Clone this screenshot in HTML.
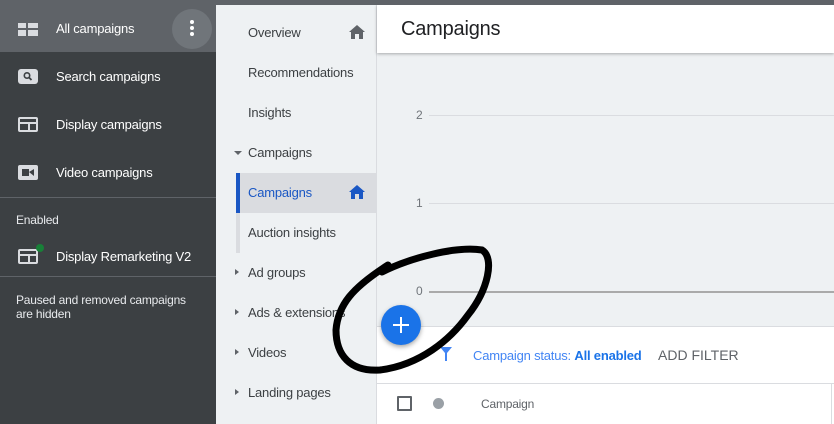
<!DOCTYPE html>
<html><head><style>
*{margin:0;padding:0;box-sizing:border-box}
body{width:834px;height:424px;overflow:hidden;font-family:"Liberation Sans",Arial,sans-serif;background:#eef1f3;position:relative;letter-spacing:-0.2px}
.abs{position:absolute}
.side{left:0;top:0;width:216px;height:424px;background:#3c4043;color:#fff;font-size:13px}
.topbar{left:0;top:0;width:834px;height:5px;background:#5f6368;z-index:5}
.si{position:absolute;left:0;width:216px;height:48px;display:flex;align-items:center}
.si .ic{position:absolute;left:18px;width:20px;height:16px;background:#dadce0;border-radius:2px}
.si span{position:absolute;left:56px}
.nav{left:216px;top:0;width:161px;height:424px;background:#eef1f3;border-right:1px solid #dadce0;font-size:13px;color:#3c4043}
.ni{position:absolute;left:32px}
.tri{position:absolute;left:19px;width:0;height:0;border-top:3px solid transparent;border-bottom:3px solid transparent;border-left:4px solid #5f6368}
</style></head><body>
<div class="abs topbar"></div>
<div class="abs side">
 <div class="si" style="top:5px;background:#5f6368;height:47px">
  <div style="position:absolute;left:18px;top:18px;width:20px;height:14px">
   <div class="abs" style="left:0;top:0;width:8px;height:5px;background:#dadce0"></div>
   <div class="abs" style="left:10px;top:0;width:10px;height:5px;background:#dadce0"></div>
   <div class="abs" style="left:0;top:7px;width:8px;height:6px;background:#dadce0"></div>
   <div class="abs" style="left:10px;top:7px;width:10px;height:6px;background:#dadce0"></div>
  </div>
  <span>All campaigns</span>
  <div class="abs" style="left:172px;top:4px;width:40px;height:40px;border-radius:50%;background:#70757a"></div>
  <div class="abs" style="left:190px;top:15px;width:4px;height:4px;border-radius:50%;background:#fff;box-shadow:0 6px 0 #fff,0 12px 0 #fff"></div>
 </div>
 <div class="si" style="top:52px"><div class="ic" style="top:17px;height:15px;border-radius:3px"></div>
  <svg class="abs" style="left:22px;top:19px" width="12" height="11" viewBox="0 0 12 11"><circle cx="5" cy="4.5" r="2.7" fill="none" stroke="#3c4043" stroke-width="1.6"/><path d="M7 6.5L9.5 9" stroke="#3c4043" stroke-width="1.8"/></svg>
  <span>Search campaigns</span></div>
 <div class="si" style="top:100px"><div class="ic" style="top:17px;height:15px;background:none;border:2px solid #dadce0"></div><div class="abs" style="left:18px;top:22px;width:20px;height:2px;background:#dadce0"></div><div class="abs" style="left:28px;top:22px;width:2px;height:9px;background:#dadce0"></div><span>Display campaigns</span></div>
 <div class="si" style="top:148px"><div class="ic" style="top:17px;height:15px"></div><svg class="abs" style="left:22px;top:20px" width="12" height="9" viewBox="0 0 12 9"><path d="M0 1h7v7H0zM7 4l5-3v7z" fill="#3c4043"/></svg><span>Video campaigns</span></div>
 <div class="abs" style="left:0;top:197px;width:216px;height:1px;background:#5f6368"></div>
 <div class="abs" style="left:16px;top:213px;font-size:12px;color:#e8eaed">Enabled</div>
 <div class="si" style="top:232px"><div class="ic" style="top:17px;height:15px;background:none;border:2px solid #dadce0"></div><div class="abs" style="left:18px;top:22px;width:20px;height:2px;background:#dadce0"></div><div class="abs" style="left:28px;top:22px;width:2px;height:9px;background:#dadce0"></div><div class="abs" style="left:36px;top:12px;width:8px;height:8px;border-radius:50%;background:#188038"></div><span>Display Remarketing V2</span></div>
 <div class="abs" style="left:0;top:276px;width:216px;height:1px;background:#5f6368"></div>
 <div class="abs" style="left:16px;top:293px;font-size:12px;line-height:14px;color:#e8eaed">Paused and removed campaigns<br>are hidden</div>
</div>
<div class="abs nav">
 <div class="ni" style="top:25px">Overview</div>
 <svg class="abs" style="left:133px;top:25px" width="16" height="14" viewBox="0 0 16 14"><path d="M8 0L0 7h2v7h4V9h4v5h4V7h2z" fill="#5f6368"/></svg>
 <div class="ni" style="top:65px">Recommendations</div>
 <div class="ni" style="top:105px">Insights</div>
 <div class="abs" style="left:18px;top:151px;border-left:4px solid transparent;border-right:4px solid transparent;border-top:4px solid #5f6368"></div>
 <div class="ni" style="top:145px">Campaigns</div>
 <div class="abs" style="left:20px;top:173px;width:4px;height:80px;background:#dadce0"></div>
 <div class="abs" style="left:20px;top:173px;width:140px;height:40px;background:#dadce0;border-left:4px solid #1a57c4"></div>
 <div class="ni" style="top:185px;color:#1a57c4">Campaigns</div>
 <svg class="abs" style="left:133px;top:185px" width="16" height="14" viewBox="0 0 16 14"><path d="M8 0L0 7h2v7h4V9h4v5h4V7h2z" fill="#1a57c4"/></svg>
 <div class="ni" style="top:225px">Auction insights</div>
 <div class="tri" style="top:269px"></div><div class="ni" style="top:265px">Ad groups</div>
 <div class="tri" style="top:309px"></div><div class="ni" style="top:305px">Ads &amp; extensions</div>
 <div class="tri" style="top:349px"></div><div class="ni" style="top:345px">Videos</div>
 <div class="tri" style="top:389px"></div><div class="ni" style="top:385px">Landing pages</div>
</div>
<div class="abs" style="left:377px;top:5px;width:457px;height:48px;background:#fff;box-shadow:0 1px 3px rgba(0,0,0,.3)"></div>
<div class="abs" style="left:401px;top:18px;font-size:20px;color:#202124">Campaigns</div>
<div class="abs" style="left:416px;top:108px;font-size:12px;color:#70757a">2</div>
<div class="abs" style="left:429px;top:115px;width:405px;height:1px;background:#dadce0"></div>
<div class="abs" style="left:416px;top:196px;font-size:12px;color:#70757a">1</div>
<div class="abs" style="left:429px;top:203px;width:405px;height:1px;background:#dadce0"></div>
<div class="abs" style="left:416px;top:284px;font-size:12px;color:#70757a">0</div>
<div class="abs" style="left:429px;top:291px;width:405px;height:2px;background:#aaa"></div>
<div class="abs" style="left:377px;top:326px;width:457px;height:98px;background:#fff;border-top:1px solid #dadce0"></div>
<svg class="abs" style="left:440px;top:347px" width="12" height="14" viewBox="0 0 12 14"><path d="M0 0h12L7 6v8H5V6z" fill="#4285f4"/></svg>
<div class="abs" style="left:473px;top:348px;font-size:13px;color:#4285f4">Campaign status: <b style="color:#1a73e8">All enabled</b></div>
<div class="abs" style="left:658px;top:347px;font-size:14px;color:#5f6368;letter-spacing:0">ADD FILTER</div>
<div class="abs" style="left:377px;top:383px;width:457px;height:1px;background:#dadce0"></div>
<div class="abs" style="left:831px;top:383px;width:1px;height:41px;background:#dadce0"></div>
<div class="abs" style="left:397px;top:396px;width:15px;height:15px;border:2px solid #5f6368;border-radius:1px"></div>
<div class="abs" style="left:433px;top:398px;width:11px;height:11px;border-radius:50%;background:#9aa0a6"></div>
<div class="abs" style="left:481px;top:397px;font-size:12px;color:#5f6368">Campaign</div>
<div class="abs" style="left:381px;top:305px;width:40px;height:40px;border-radius:50%;background:#1a73e8;box-shadow:0 2px 5px rgba(0,0,0,.35)"></div>
<div class="abs" style="left:393px;top:324px;width:16px;height:2px;background:#fff"></div>
<div class="abs" style="left:400px;top:317px;width:2px;height:16px;background:#fff"></div>
<svg class="abs" style="left:0;top:0" width="834" height="424"><path d="M382 272 C410 258 455 246 482 250 C495 258 488 290 468 315 C450 340 420 365 380 370 C350 372 336 355 336 330 C338 305 352 288 388 265" fill="none" stroke="#000" stroke-width="7" stroke-linecap="round"/></svg>
</body></html>
